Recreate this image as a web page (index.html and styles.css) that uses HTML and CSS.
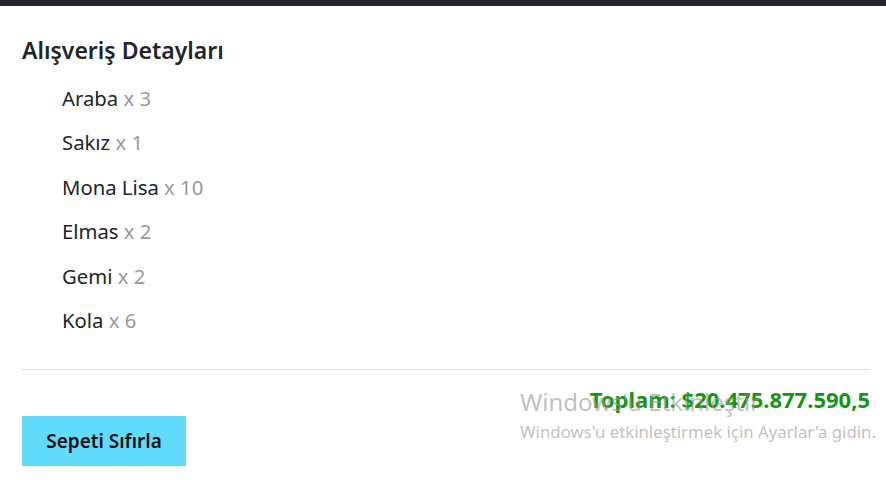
FILE: index.html
```html
<!DOCTYPE html>
<html lang="tr">
<head>
<meta charset="utf-8">
<link rel="stylesheet" href="styles.css">
</head>
<body>
<div class="topbar"></div>
<main class="cart">
  <h2 class="title">Alışveriş Detayları</h2>
  <ul class="items">
    <li>Araba <span class="qty">x 3</span></li>
    <li>Sakız <span class="qty">x 1</span></li>
    <li>Mona Lisa <span class="qty">x 10</span></li>
    <li>Elmas <span class="qty">x 2</span></li>
    <li>Gemi <span class="qty">x 2</span></li>
    <li>Kola <span class="qty">x 6</span></li>
  </ul>
  <hr class="divider">
  <div class="total">Toplam: $20.475.877.590,5</div>
  <button class="reset">Sepeti Sıfırla</button>
</main>
<div class="watermark">
  <div class="wm-title">Windows'u Etkinleştir</div>
  <div class="wm-sub">Windows'u etkinleştirmek için Ayarlar'a gidin.</div>
</div>
</body>
</html>
```
FILE: styles.css
```css
html, body {
  margin: 0;
  padding: 0;
  background: #fff;
}
body {
  font-family: "Noto Sans", "Open Sans", sans-serif;
  color: #212529;
  width: 886px;
  height: 480px;
  overflow: hidden;
  position: relative;
}
.topbar {
  height: 6px;
  background: #212529;
}
.cart {
  padding: 28px 16px 0 22px;
  display: flex;
  flex-direction: column;
}
.title {
  margin: 0;
  font-size: 23px;
  font-weight: 600;
  line-height: 32px;
}
.items {
  list-style: none;
  margin: 10px 0 0;
  padding: 0 0 0 40px;
}
.items li {
  font-size: 20.3px;
  line-height: 44.4px;
  height: 44.4px;
}
.qty {
  color: #999;
}
.divider {
  margin: 27px 0 0;
  border: 0;
  border-top: 1px solid #dcdcdc;
  width: 848px;
}
.total {
  margin-top: 14px;
  text-align: right;
  font-size: 22px;
  font-weight: 700;
  line-height: 30px;
  color: #149614;
  width: 848px;
}
.reset {
  margin-top: 2px;
  align-self: flex-start;
  width: 164px;
  height: 50px;
  border: 0;
  background: #61dafb;
  font-family: "Noto Sans", "Open Sans", sans-serif;
  font-size: 19px;
  font-weight: 600;
  color: #111;
  padding: 0;
}
.watermark {
  position: absolute;
  left: 520px;
  top: 385px;
  color: rgba(150, 150, 150, 0.6);
  font-family: "Noto Sans", "Open Sans", sans-serif;
  pointer-events: none;
  white-space: nowrap;
}
.wm-title {
  font-size: 24px;
  line-height: 34px;
}
.wm-sub {
  font-size: 16.8px;
  line-height: 26px;
}
```
